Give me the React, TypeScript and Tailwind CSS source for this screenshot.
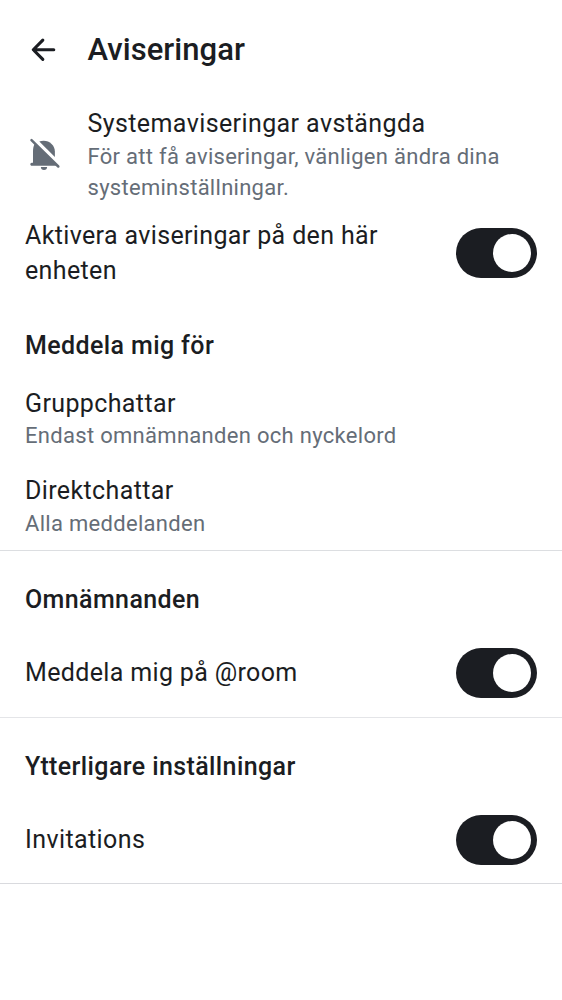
import React from "react";

function Toggle() {
  return (
    <button role="switch" aria-checked="true" className="flex h-[50px] w-[81px] shrink-0 items-center justify-end rounded-full bg-[#1b1d22] pr-[6px]">
      <span className="size-[38px] rounded-full bg-white" />
    </button>
  );
}

function Heading({ children, className }: { children: React.ReactNode; className: string }) {
  return <h2 className={`text-[25px] font-medium leading-[38px] tracking-[0.39px] whitespace-nowrap ${className}`}>{children}</h2>;
}

function Choice({ title, value }: { title: string; value: string }) {
  return (
    <div className="flex h-[87.5px] flex-col pt-[12px]">
      <span className="self-start text-[25px] leading-[35px] tracking-[0.38px] whitespace-nowrap">{title}</span>
      <span className="-mt-[0.5px] self-start text-[22px] leading-[31px] tracking-[0.3px] whitespace-nowrap text-[#656d77]">{value}</span>
    </div>
  );
}

export default function App() {
  return (
    <main className="flex h-[1000px] w-[562px] flex-col overflow-hidden bg-white font-['Roboto',sans-serif] text-[#1b1d22]">
      <header className="flex h-[100px] shrink-0 items-center pl-[25px]">
        <svg viewBox="0 0 24 24" className="size-[37.5px] shrink-0" fill="none" stroke="currentColor" strokeWidth="2" strokeLinecap="round" strokeLinejoin="round">
          <path d="M18.4 12H5.4M11.4 5.9 5.3 12l6.1 6.1" />
        </svg>
        <h1 className="ml-[25px] text-[31px] font-medium leading-[40px] tracking-[0.04px]">Aviseringar</h1>
      </header>
      <section className="flex h-[106px] shrink-0 pt-[6px] pl-[25px]">
        <svg viewBox="25 135 38 38" className="mt-[29px] size-[38px] shrink-0 text-[#656d77]" fill="currentColor">
          <path d="M39.3 141.6c1.3-.6 2.7-.9 4.3-.9 6.2 0 11.3 4.8 11.3 11v5.2L39.3 141.6Z" />
          <path d="M33 151.5c0-3.2.6-5.7 1.9-7.9L56.5 165.8H31.8c-2 0-2-3.1 0-3.1H33Z" />
          <path d="m31.5 140.2 26.8 26.3" stroke="currentColor" strokeWidth="2.5" strokeLinecap="round" />
          <path d="M40.9 167.1h6.2a3.1 2.9 0 0 1-6.2 0Z" />
        </svg>
        <div className="ml-[24.5px] flex flex-col items-start">
          <span className="text-[25px] leading-[35px] tracking-[0.4px] whitespace-nowrap">Systemaviseringar avstängda</span>
          <span className="text-[22px] leading-[31px] tracking-[0.28px] whitespace-nowrap text-[#656d77]">För att få aviseringar, vänligen ändra dina<br />systeminställningar.</span>
        </div>
      </section>
      <section className="flex h-[94px] shrink-0 items-center justify-between px-[25px]">
        <span className="text-[25px] leading-[35px] tracking-[0.36px] whitespace-nowrap">Aktivera aviseringar på den här<br />enheten</span>
        <Toggle />
      </section>
      <section className="h-[251px] shrink-0 border-b border-[#dcdee1] px-[25px] pt-[27px]">
        <Heading className="mb-[8.5px]">Meddela mig för</Heading>
        <Choice title="Gruppchattar" value="Endast omnämnanden och nyckelord" />
        <Choice title="Direktchattar" value="Alla meddelanden" />
      </section>
      <section className="h-[167px] shrink-0 border-b border-[#e4e5e8] px-[25px] pt-[30px]">
        <Heading className="">Omnämnanden</Heading>
        <div className="mt-[29px] flex h-[50px] items-center justify-between">
          <span className="text-[25px] tracking-[0.35px]">Meddela mig på @room</span>
          <Toggle />
        </div>
      </section>
      <section className="h-[166px] shrink-0 border-b border-[#d9dade] px-[25px] pt-[29.5px]">
        <Heading className="">Ytterligare inställningar</Heading>
        <div className="mt-[29px] flex h-[50px] items-center justify-between">
          <span className="text-[25px] tracking-[0.4px]">Invitations</span>
          <Toggle />
        </div>
      </section>
    </main>
  );
}
